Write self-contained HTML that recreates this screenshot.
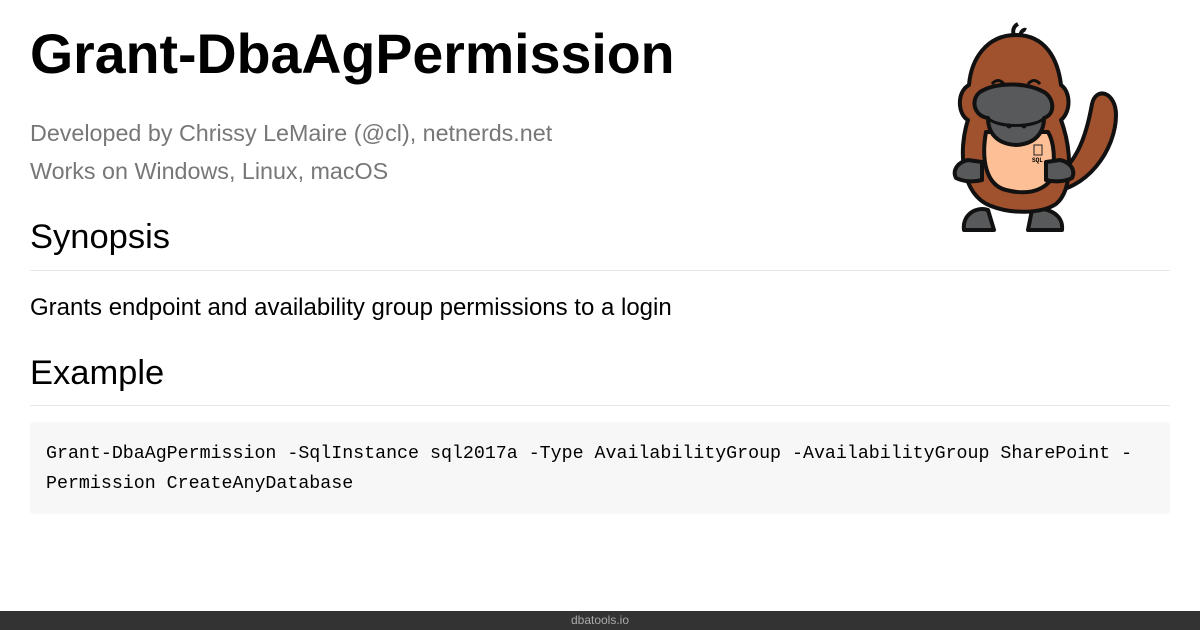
<!DOCTYPE html>
<html><head><meta charset="utf-8"><style>
body{margin:0;width:1200px;height:630px;background:#fff;position:relative;overflow:hidden;font-family:"Liberation Sans",sans-serif;color:#000}
.a{position:absolute;left:30px;white-space:nowrap}
h1{position:absolute;left:30px;top:22px;margin:0;font-size:55.5px;font-weight:bold;letter-spacing:0}
.g{color:#777;font-size:23.3px}
h2{margin:0;font-size:34.5px;font-weight:normal}
.hr{position:absolute;left:30px;width:1140px;height:1px;background:#e8e8e8}
.code{position:absolute;left:30px;top:422px;width:1140px;height:92px;background:#f7f7f7;border-radius:3px;font-family:"Liberation Mono",monospace;font-size:18.3px;line-height:30px}
.code div{position:absolute;left:16px;top:17px;white-space:pre}
.foot{position:absolute;left:0;top:611px;width:1200px;height:19px;background:#333;color:#aaa;font-size:12px;text-align:center;line-height:19px}
</style></head><body>
<h1>Grant-DbaAgPermission</h1>
<div class="a g" style="top:120px">Developed by Chrissy LeMaire (@cl), netnerds.net</div>
<div class="a g" style="top:158px">Works on Windows, Linux, macOS</div>
<h2 class="a" style="top:218px">Synopsis</h2>
<div class="hr" style="top:270px"></div>
<div class="a" style="top:294px;font-size:24px">Grants endpoint and availability group permissions to a login</div>
<h2 class="a" style="top:354px">Example</h2>
<div class="hr" style="top:405px"></div>
<div class="code"><div>Grant-DbaAgPermission -SqlInstance sql2017a -Type AvailabilityGroup -AvailabilityGroup SharePoint -
Permission CreateAnyDatabase</div></div>
<svg style="position:absolute;left:936px;top:20px" width="200" height="220" viewBox="0 0 200 220">
<g stroke="#111" stroke-width="4" stroke-linejoin="round">
<path d="M78 16 C76 10 78 6 82 4 M84 16 C85 11 88 9 90 10" fill="none"/>
<path d="M110 172 C150 172 180 130 180 95 C180 72 160 66 156 84 C150 118 140 148 108 165 Z" fill="#a0512d"/>
<path d="M28 210 C26 195 40 186 52 190 L58 210 Z" fill="#58595b"/>
<path d="M92 210 L96 190 C110 186 128 194 126 210 Z" fill="#58595b"/>
<path d="M80 15 C50 15 35 40 33 65 C20 72 22 95 32 100 C22 130 25 175 55 186 C75 194 105 194 120 184 C137 170 136 130 125 100 C135 92 135 72 125 65 C122 40 110 15 80 15 Z" fill="#a0512d"/>
<path d="M50 112 C45 140 50 165 70 170 C90 175 105 172 115 160 C120 140 118 122 112 112 Z" fill="#fdbf95"/>
<path d="M44 72 C34 80 38 96 52 98 C52 114 62 124 80 125 C100 124 108 112 108 98 C120 94 118 78 108 72 C90 62 60 62 44 72 Z" fill="#58595b"/>
<path d="M52 98 C60 108 100 108 108 98" fill="none" stroke-width="3"/>
<path d="M20 158 C16 150 22 142 32 140 L46 142 L46 160 C38 162 28 162 20 158 Z" fill="#58595b"/>
<path d="M136 158 C140 150 134 142 124 140 L110 142 L110 160 C118 162 128 162 136 158 Z" fill="#58595b"/>
</g>
<path d="M56 64 Q62 57 68 64 M92 64 Q98 57 104 64" stroke="#111" stroke-width="3" fill="none"/>
<circle cx="73" cy="106" r="2.5" fill="#111"/><circle cx="88" cy="106" r="2.5" fill="#111"/>
<rect x="98" y="125" width="8" height="10" fill="none" stroke="#222" stroke-width="1"/>
<text x="96" y="142" font-size="6" font-family="Liberation Mono" font-weight="bold">SQL</text>
</svg>
<div class="foot">dbatools.io</div>
</body></html>
